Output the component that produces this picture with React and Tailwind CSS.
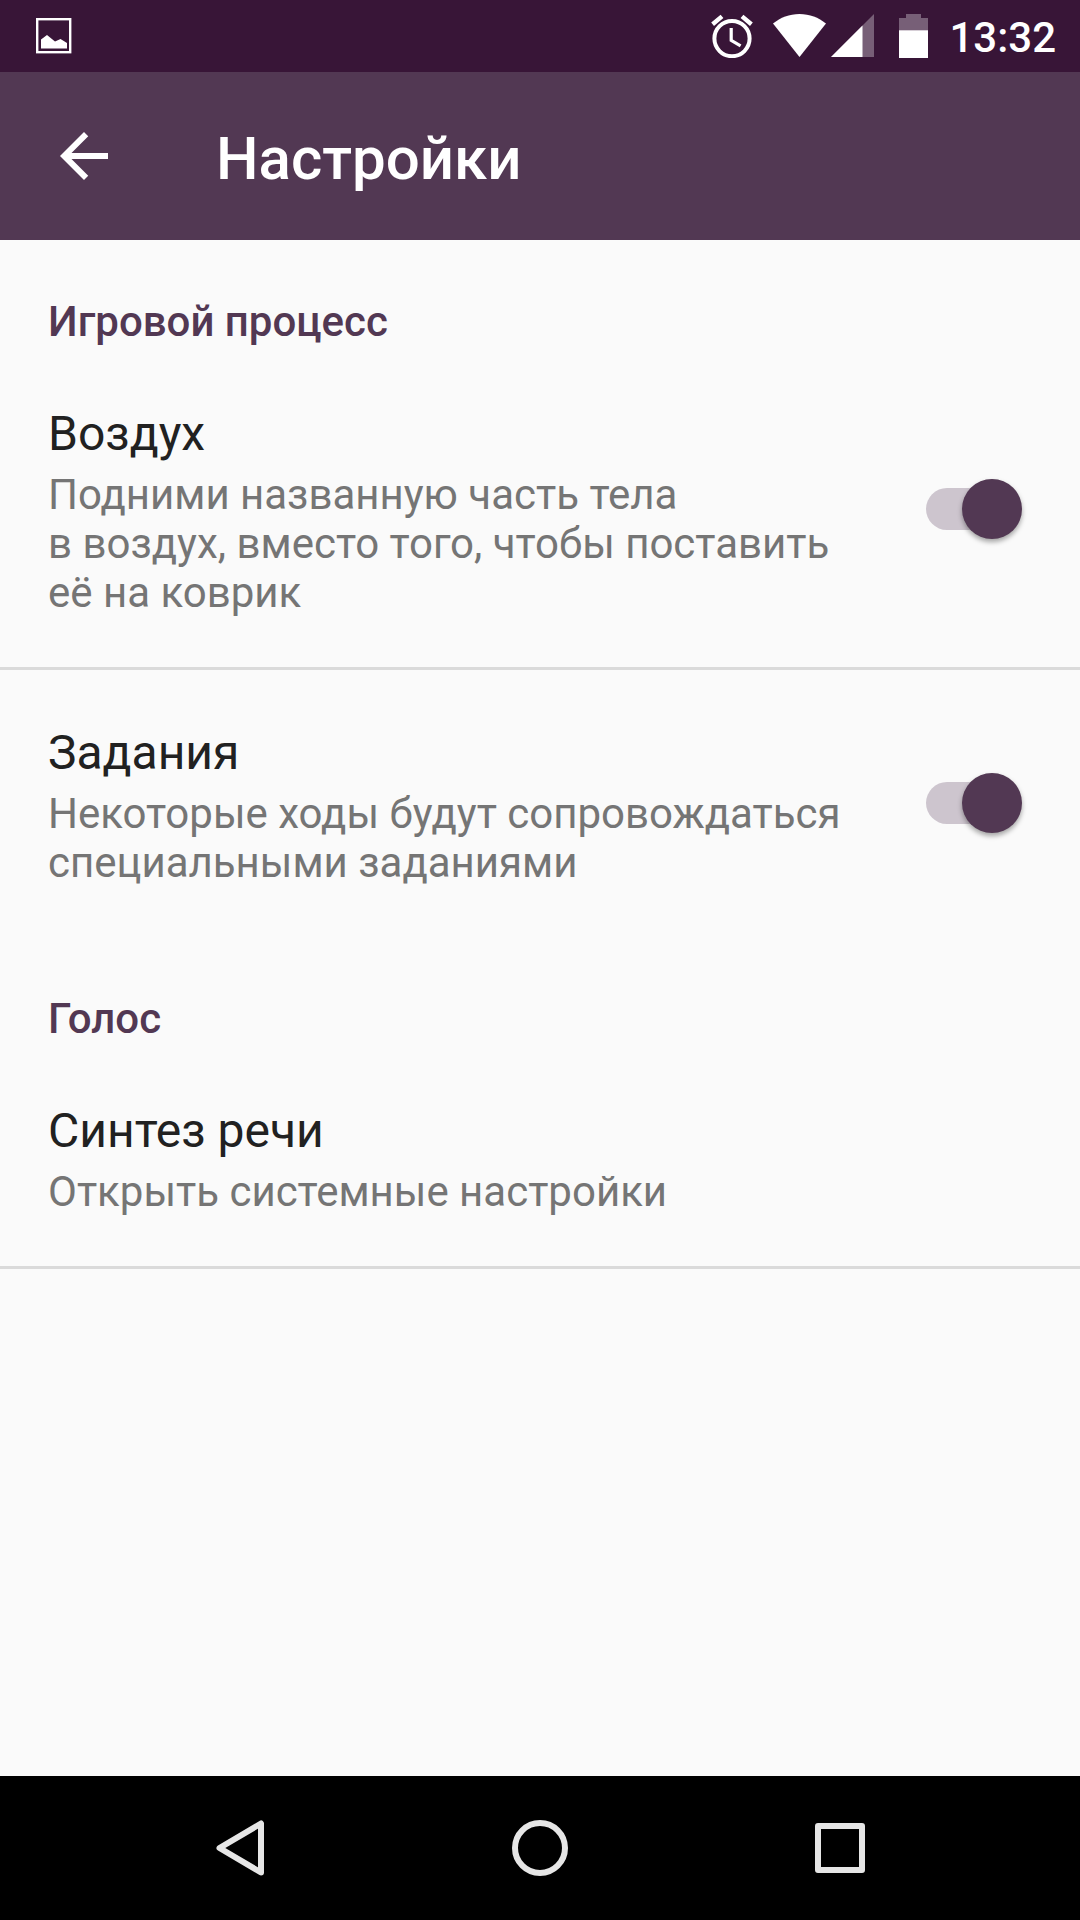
import React, { useState } from "react";

const PictureIcon = () => (
  <svg width="36" height="36" viewBox="0 0 36 36" aria-hidden="true">
    <rect x="1.2" y="1.2" width="33" height="33" fill="none" stroke="#fff" strokeWidth="2.4" />
    <path d="M5 30.500V21.500L11 17L19 23.500L24.500 21L31 25V30.500Z" fill="#fff" />
  </svg>
);

const AlarmIcon = () => (
  <svg width="42" height="44" viewBox="0 0 42 44" fill="none" stroke="#fff" aria-hidden="true">
    <circle cx="21" cy="24.6" r="17.6" strokeWidth="4" />
    <path d="M1.600 10.200L11 2.400M40.400 10.200L31 2.400" strokeWidth="4.4" />
    <path d="M20.200 14V26.400L29.600 31.800" strokeWidth="3.2" />
  </svg>
);

const WifiIcon = () => (
  <svg width="53" height="44" viewBox="0 0 53 44" aria-hidden="true">
    <path d="M0 9.600C7.500 3.400 16.300 0 26.500 0S45.500 3.400 53 9.600L26.500 43Z" fill="#fff" />
  </svg>
);

const SignalIcon = () => (
  <svg width="43" height="44" viewBox="0 0 43 44" aria-hidden="true">
    <path d="M0 43L43 0V43Z" fill="#775f77" />
    <path d="M0 43L31.500 11.500V43Z" fill="#fff" />
  </svg>
);

const BatteryIcon = () => (
  <svg width="29" height="44" viewBox="0 0 29 44" aria-hidden="true">
    <path d="M0 4H7V0H22V4H29V17H0Z" fill="#775f77" />
    <path d="M0 16.300H29V44H0Z" fill="#fff" />
  </svg>
);

const StatusBar = () => (
  <div className="h-18 bg-[#381537] flex items-center justify-between pl-9 pr-6">
    <PictureIcon />
    <div className="flex items-center gap-5">
      <AlarmIcon />
      <div className="flex items-center gap-[5px]">
        <WifiIcon />
        <SignalIcon />
      </div>
      <div className="flex items-center gap-[21px] pl-[5px]">
        <BatteryIcon />
        <span className="pt-0.5 text-[42px] leading-[49px] font-medium text-white">13:32</span>
      </div>
    </div>
  </div>
);

const Category = ({ children }) => (
  <h2 className="px-12 pt-[57px] pb-[5px] text-[42px] leading-[49px] font-medium text-[#523853]">
    {children}
  </h2>
);

const rowClass = "w-full flex items-center gap-18 pl-12 pr-[58px] pt-[55px] pb-[50px] text-left";

const RowText = ({ title, text }) => (
  <span className="flex-1 flex flex-col gap-2">
    <span className="text-[48px] leading-[56px] text-[#212121]">{title}</span>
    <span className="text-[42px] leading-[49px] text-[#757575]">{text}</span>
  </span>
);

const SwitchRow = ({ title, text }) => {
  const [checked, setChecked] = useState(true);

  return (
    <label className={rowClass}>
      <RowText title={title} text={text} />
      <input
        type="checkbox"
        role="switch"
        checked={checked}
        onChange={(e) => setChecked(e.target.checked)}
        className="appearance-none relative shrink-0 mb-1.5 w-24 h-[60px] before:absolute before:left-0 before:right-2 before:inset-y-[9px] before:rounded-full before:bg-[#bdbdbd] checked:before:bg-[#cdc5ce] after:absolute after:top-0 after:left-0 after:size-[60px] after:rounded-full after:bg-[#f1f1f1] after:shadow-[0_3px_5px_rgba(0,0,0,0.35)] checked:after:left-9 checked:after:bg-[#523853]"
      />
    </label>
  );
};

const NavBar = () => (
  <nav className="h-36 bg-black flex px-[90px]">
    <button aria-label="Назад" className="flex-1 flex items-center justify-center">
      <svg width="48" height="56" viewBox="0 0 48 56" fill="none" stroke="#e6e6e6" strokeWidth="6" strokeLinejoin="round">
        <path d="M45 3.500V52.500L3.500 28Z" />
      </svg>
    </button>
    <button aria-label="Домой" className="flex-1 flex items-center justify-center">
      <svg width="56" height="56" viewBox="0 0 56 56" fill="none" stroke="#e6e6e6" strokeWidth="6">
        <circle cx="28" cy="28" r="25" />
      </svg>
    </button>
    <button aria-label="Недавние" className="flex-1 flex items-center justify-center">
      <svg width="50" height="50" viewBox="0 0 50 50" fill="none" stroke="#e6e6e6" strokeWidth="6" strokeLinejoin="round">
        <rect x="3" y="3" width="44" height="44" />
      </svg>
    </button>
  </nav>
);

const App = () => {
  return (
    <div className="min-h-screen flex flex-col bg-[#fafafa] font-['Roboto',sans-serif]">
      <StatusBar />

      <header className="h-42 bg-[#523853] flex items-center gap-24 px-12">
        <button aria-label="Вернуться">
          <svg width="72" height="72" viewBox="0 0 24 24" fill="#fff">
            <path d="M20 11H7.830L13.420 5.410L12 4L4 12L12 20L13.410 18.590L7.830 13H20Z" />
          </svg>
        </button>
        <h1 className="pt-1.5 text-[60px] leading-[70px] font-medium text-white">Настройки</h1>
      </header>

      <main className="flex-1">
        <section>
          <Category>Игровой процесс</Category>
          <div className="border-b-3 border-[#dadada]">
            <SwitchRow
              title="Воздух"
              text={"Подними названную часть тела в\u00a0воздух, вместо того, чтобы поставить её\u00a0на\u00a0коврик"}
            />
          </div>
          <SwitchRow
            title="Задания"
            text="Некоторые ходы будут сопровождаться специальными заданиями"
          />
        </section>

        <section>
          <Category>Голос</Category>
          <div className="border-b-3 border-[#dadada]">
            <button className={rowClass}>
              <RowText title="Синтез речи" text="Открыть системные настройки" />
            </button>
          </div>
        </section>
      </main>

      <NavBar />
    </div>
  );
};

export default App;
